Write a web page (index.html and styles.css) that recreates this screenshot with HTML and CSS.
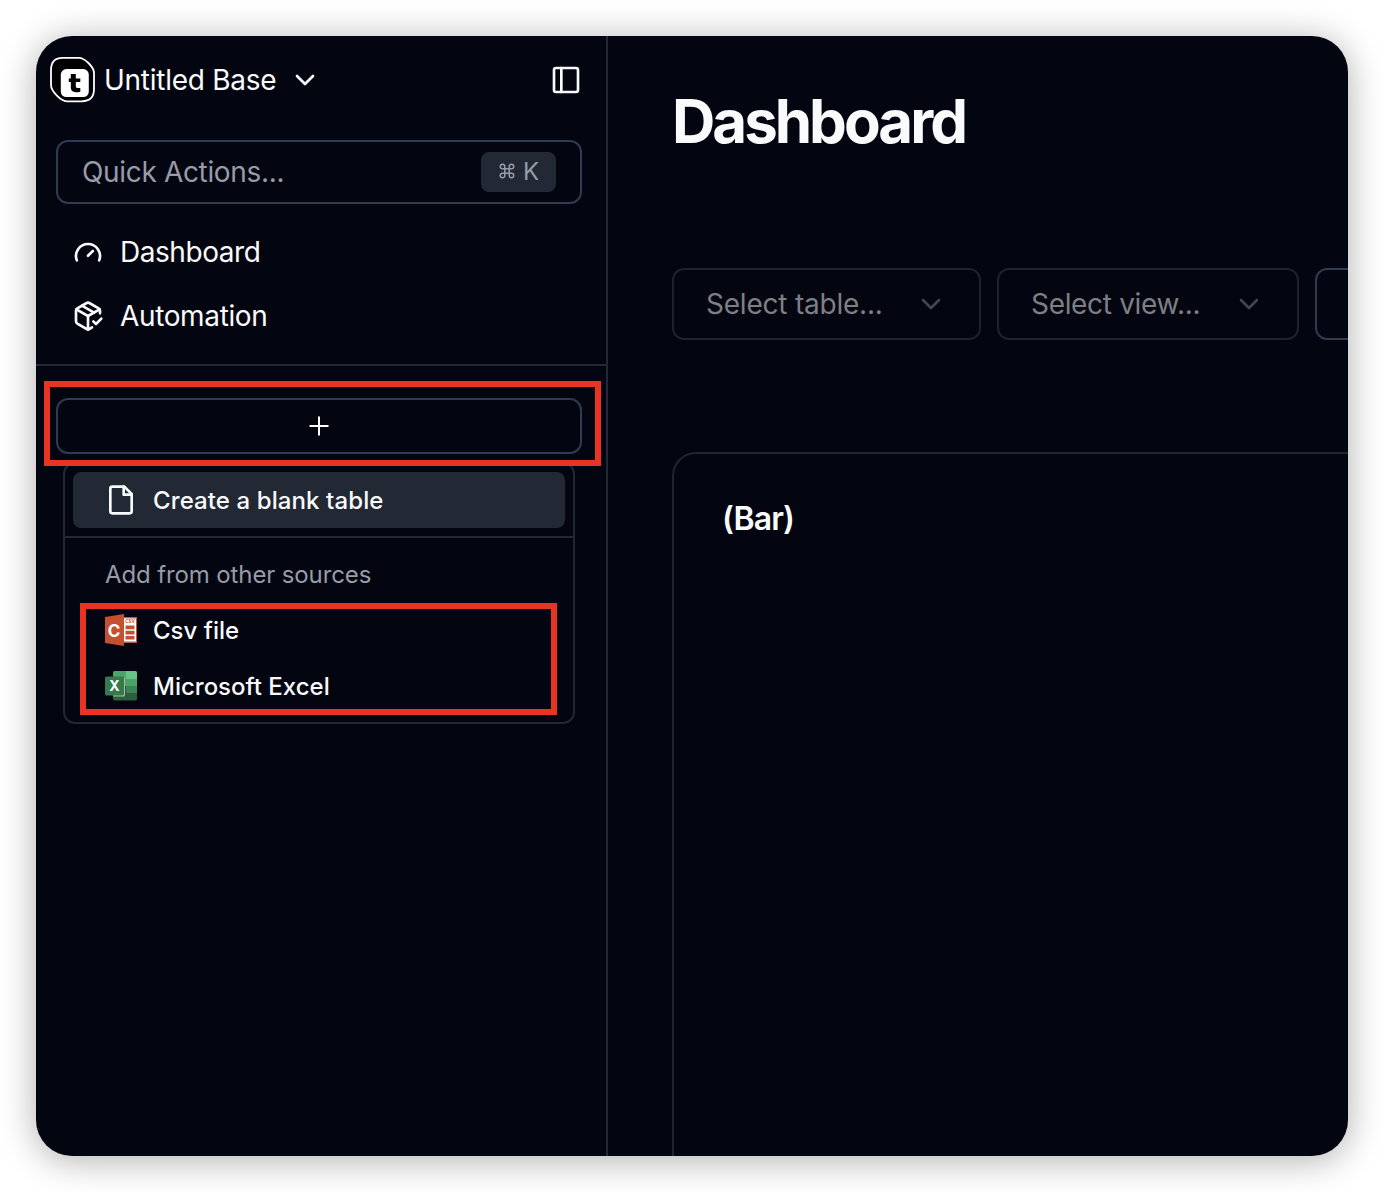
FILE: index.html
```html
<!DOCTYPE html>
<html lang="en">
<head>
<meta charset="utf-8">
<title>Dashboard</title>
<link rel="stylesheet" href="styles.css">
</head>
<body>
<div class="window">
  <aside class="sidebar">
    <header class="base-header">
      <svg class="logo" width="46" height="47" viewBox="-.8 .9 46 47">
        <path d="M13 1.8H29C35 1.8 44.2 11 44.2 17V33C44.2 41 40 45.2 32 45.2H17C11 45.2 1.2 35 1.2 29V14C1.2 6 5 1.8 13 1.8Z" fill="#000" stroke="#fff" stroke-width="1.8"/>
        <rect x="11" y="13" width="28" height="28" rx="5.5" fill="#fff"/>
        <path d="M21 18H26V22.5H30.5V26H26V30.5Q26 32 28 32H30.5V35.6Q28.5 36.2 26 36.2Q21 36 21 31.5V26H19V22.5H21Z" fill="#000"/>
      </svg>
      <span class="base-name">Untitled Base</span>
      <svg class="icon base-chevron" width="32" height="32" viewBox="0 0 24 24"><path d="m6 9 6 6 6-6"/></svg>
      <svg class="icon panel-icon" width="32" height="32" viewBox="0 0 24 24"><rect x="3" y="3" width="18" height="18" rx="1.5"/><path d="M8.5 3v18"/></svg>
    </header>
    <div class="search">
      <span class="search-label">Quick Actions...</span>
      <kbd class="shortcut"><svg class="icon" width="18" height="18" viewBox="0 0 24 24"><path d="M15 6v12a3 3 0 1 0 3-3H6a3 3 0 1 0 3 3V6a3 3 0 1 0-3 3h12a3 3 0 1 0-3-3"/></svg><span>K</span></kbd>
    </div>
    <nav class="nav">
      <a class="nav-item"><svg class="icon" width="32" height="32" viewBox="0 0 24 24"><path d="m12 14.8 3.6-3.6"/><path d="M3.6 18.2A9 9 0 1 1 20.4 18.2"/></svg><span class="nav-dashboard">Dashboard</span></a>
      <a class="nav-item"><svg class="icon" width="32" height="32" viewBox="0 0 24 24"><path d="m16 16 2 2 4-4"/><path d="M21 10V8a2 2 0 0 0-1-1.73l-7-4a2 2 0 0 0-2 0l-7 4A2 2 0 0 0 3 8v8a2 2 0 0 0 1 1.73l7 4a2 2 0 0 0 2 0l2-1.14"/><path d="m7.5 4.27 9 5.15"/><path d="M3.29 7 12 12l8.71-5"/><path d="M12 22V12"/></svg><span class="nav-automation">Automation</span></a>
    </nav>
    <section class="tables">
      <button class="add-button"><svg width="20" height="20" viewBox="0 0 20 20"><path d="M10 .5v19M.5 10h19" stroke="#fff" stroke-width="2"/></svg></button>
      <div class="menu">
        <div class="menu-item active"><svg class="icon" width="32" height="32" viewBox="0 0 24 24"><path d="M14.5 2H5.5A1.5 1.5 0 0 0 4 3.5v17A1.5 1.5 0 0 0 5.500 22h13a1.500 1.500 0 0 0 1.500-1.500V7.500L14.500 2z"/><path d="M14 2v6h6"/></svg><span class="item-blank">Create a blank table</span></div>
        <hr class="menu-divider">
        <div class="menu-label">Add from other sources</div>
        <div class="menu-item">
          <svg width="32" height="32" viewBox="0 0 32 32">
            <path d="M18 3.5H32V28.5H18Z" fill="#fff"/><path d="M31 4.5V27.5H19V28.7H32V3.3H19V4.3Z" fill="#c8502f"/>
            <path d="M0 3 19 0V32L0 29Z" fill="#c35031"/>
            <text x="25" y="9" class="csv-caption">CSV</text>
            <path d="M20.5 11.5h9v3.8h-9zM20.5 16.8h9v3.8h-9zM20.5 22h9v3.5h-9z" fill="#c35031"/>
            <text x="9" y="22.8" class="csv-letter">C</text>
          </svg><span class="item-csv">Csv file</span></div>
        <div class="menu-item">
          <svg width="32" height="32" viewBox="0 0 32 32">
            <path d="M8 2.5Q8 1 9.5 1H21V9H8Z" fill="#4ba366"/><path d="M21 1H30.5Q32 1 32 2.5V9H21Z" fill="#67c288"/>
            <path d="M8 9H21V16H8Z" fill="#4ba366"/><path d="M21 9H32V16H21Z" fill="#4ba366"/>
            <path d="M8 16H32V29Q32 30.500 30.500 30.500H9.500Q8 30.500 8 29Z" fill="#2f5e3d"/><path d="M21 16H32V23H21Z" fill="#3b8453"/>
            <path d="M8 7H18.5Q20 7 20 8.5V25Q20 26.5 18.5 26.5H8Z" fill="#a4bba9"/>
            <rect y="6.5" width="19" height="19" rx="1.5" fill="#37794b"/>
            <text x="9.4" y="20.8" class="excel-letter">X</text>
          </svg><span class="item-excel">Microsoft Excel</span></div>
      </div>
    </section>
    <div class="callout callout-add"></div>
    <div class="callout callout-sources"></div>
  </aside>
  <main class="content">
    <h1 class="title"><span>Dashboard</span></h1>
    <div class="filters">
      <div class="select select-table"><span>Select table...</span><svg class="icon" width="32" height="32" viewBox="0 0 24 24"><path d="m6 9 6 6 6-6"/></svg></div>
      <div class="select select-view"><span>Select view...</span><svg class="icon" width="32" height="32" viewBox="0 0 24 24"><path d="m6 9 6 6 6-6"/></svg></div>
      <div class="select select-next"></div>
    </div>
    <section class="card"><h2 class="card-title"><span>(Bar)</span></h2></section>
  </main>
</div>
</body>
</html>
```
FILE: styles.css
```css
* { box-sizing: border-box; }
body {
  margin: 0;
  padding: 36px;
  height: 1192px;
  overflow: hidden;
  background: #fff;
  color: #f9fafb;
  font-family: Inter, "Liberation Sans", sans-serif;
  font-size: 28px;
  font-weight: 430;
}
.window {
  display: flex;
  width: 1312px;
  height: 1120px;
  overflow: hidden;
  border-radius: 36px;
  background: #030510;
  box-shadow: 0 4px 36px rgba(0, 0, 0, .32);
}
svg { display: block; flex: none; }
span { white-space: nowrap; }
.icon {
  fill: none;
  stroke: currentColor;
  stroke-width: 2;
  stroke-linecap: round;
  stroke-linejoin: round;
}

.sidebar {
  position: relative;
  flex: none;
  width: 572px;
  border-right: 2px solid #222935;
}
.base-header {
  display: flex;
  align-items: center;
  height: 88px;
  padding: 0 24px 0 13px;
}
.base-name { width: 172px; margin-left: 9px; letter-spacing: -.27px; }
.base-chevron { margin-left: 13px; }
.panel-icon { margin-left: auto; }
.search {
  display: flex;
  align-items: center;
  justify-content: space-between;
  height: 64px;
  margin: 16px 24px 0 20px;
  padding: 0 24px;
  border: 2px solid #2f3b50;
  border-radius: 12px;
  color: #969ca8;
}
.search-label { letter-spacing: -.34px; }
.shortcut {
  display: flex;
  align-items: center;
  gap: 7px;
  width: 75px;
  height: 40px;
  padding: 0 0 2px 17px;
  border-radius: 8px;
  background: #222935;
  font: 24px Inter, sans-serif;
}
.nav {
  height: 162px;
  padding: 16px 20px;
  border-bottom: 2px solid #222935;
}
.nav-item {
  display: flex;
  align-items: center;
  gap: 16px;
  height: 64px;
  padding-left: 16px;
}
.nav-dashboard { letter-spacing: -.45px; }
.nav-automation { letter-spacing: -.36px; }
.tables { position: relative; padding: 32px 24px 0 20px; }
.add-button {
  display: flex;
  align-items: center;
  justify-content: center;
  width: 100%;
  height: 56px;
  padding: 0;
  border: 2px solid #2f3b50;
  border-radius: 12px;
  background: transparent;
}
.menu {
  position: absolute;
  top: 96px;
  left: 27px;
  width: 512px;
  height: 262px;
  padding: 8px 0;
  border: 2px solid #222935;
  border-radius: 12px;
  background: #030510;
  font-size: 24px;
}
.menu-item {
  display: flex;
  align-items: center;
  gap: 16px;
  height: 56px;
  margin: 0 8px;
  padding-left: 32px;
  border-radius: 8px;
  font-weight: 530;
}
.active { background: #222935; }
.item-blank { letter-spacing: .1px; }
.menu-divider { height: 2px; margin: 8px 0; border: 0; background: #222935; }
.menu-label { height: 56px; padding-left: 40px; color: #969ca8; line-height: 58px; letter-spacing: -.12px; }
.csv-caption { fill: #c35031; font: 700 4.5px Inter, sans-serif; text-anchor: middle; }
.csv-letter { fill: #fff; font: 700 17px Inter, sans-serif; text-anchor: middle; }
.excel-letter { fill: #fff; font: 700 14px Inter, sans-serif; text-anchor: middle; }
.callout { position: absolute; border: 6px solid #e93323; }
.callout-add { left: 8px; top: 345px; width: 557px; height: 85px; }
.callout-sources { left: 44px; top: 567px; width: 477px; height: 112px; }

.content {
  display: flex;
  flex-direction: column;
  width: 738px;
  padding-left: 64px;
}
.title { margin: 49px 0 0; font-size: 60px; font-weight: 700; line-height: 72px; letter-spacing: -3px; }
.filters { display: flex; gap: 16px; margin-top: 111px; }
.select {
  display: flex;
  flex: none;
  align-items: center;
  justify-content: space-between;
  height: 72px;
  padding: 0 32px;
  border: 2px solid #1b2331;
  border-radius: 12px;
  color: #7e7f84;
}
.select .icon { color: #44464e; }
.select-table { width: 309px; letter-spacing: -.22px; }
.select-view { width: 302px; letter-spacing: -.32px; }
.select-next { width: 200px; border-color: #2f3b50; }
.card {
  flex: none;
  width: 900px;
  height: 900px;
  margin-top: 112px;
  padding: 48px;
  border: 2px solid #1f2632;
  border-radius: 24px;
}
.card-title { margin: 0; font-size: 32px; font-weight: 630; line-height: 34px; letter-spacing: -.85px; }
```
